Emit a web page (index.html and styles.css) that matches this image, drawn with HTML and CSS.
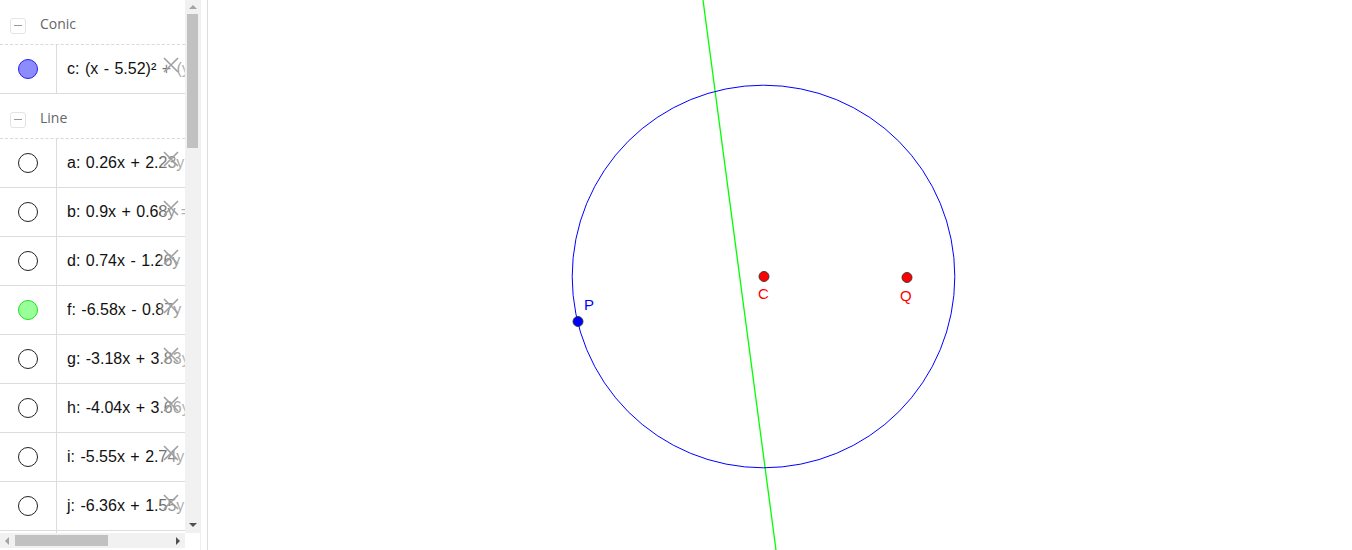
FILE: index.html
```html
<!DOCTYPE html>
<html>
<head>
<meta charset="utf-8">
<link rel="stylesheet" href="styles.css">
</head>
<body>
<div class="app">
  <div class="panel">
    <div class="panel-main">
      <div class="list">
        <div class="group">
          <span class="toggle"><span class="bar"></span></span>
          <span class="group-name">Conic</span>
        </div>
        <div class="item">
          <div class="marble-cell"><span class="marble conic"></span></div>
          <div class="formula">c: (x - 5.52)² + (y</div>
          <div class="del"><svg width="18" height="18" viewBox="0 0 18 18"><path d="M2 2 L16 16 M16 2 L2 16" /></svg></div>
        </div>
        <div class="group">
          <span class="toggle"><span class="bar"></span></span>
          <span class="group-name">Line</span>
        </div>
        <div class="item">
          <div class="marble-cell"><span class="marble"></span></div>
          <div class="formula">a: 0.26x + 2.23y</div>
          <div class="del"><svg width="18" height="18" viewBox="0 0 18 18"><path d="M2 2 L16 16 M16 2 L2 16" /></svg></div>
        </div>
        <div class="item">
          <div class="marble-cell"><span class="marble"></span></div>
          <div class="formula">b: 0.9x + 0.68y =</div>
          <div class="del"><svg width="18" height="18" viewBox="0 0 18 18"><path d="M2 2 L16 16 M16 2 L2 16" /></svg></div>
        </div>
        <div class="item">
          <div class="marble-cell"><span class="marble"></span></div>
          <div class="formula">d: 0.74x - 1.26y =</div>
          <div class="del"><svg width="18" height="18" viewBox="0 0 18 18"><path d="M2 2 L16 16 M16 2 L2 16" /></svg></div>
        </div>
        <div class="item">
          <div class="marble-cell"><span class="marble line"></span></div>
          <div class="formula">f: -6.58x - 0.87y =</div>
          <div class="del"><svg width="18" height="18" viewBox="0 0 18 18"><path d="M2 2 L16 16 M16 2 L2 16" /></svg></div>
        </div>
        <div class="item">
          <div class="marble-cell"><span class="marble"></span></div>
          <div class="formula">g: -3.18x + 3.83y</div>
          <div class="del"><svg width="18" height="18" viewBox="0 0 18 18"><path d="M2 2 L16 16 M16 2 L2 16" /></svg></div>
        </div>
        <div class="item">
          <div class="marble-cell"><span class="marble"></span></div>
          <div class="formula">h: -4.04x + 3.66y</div>
          <div class="del"><svg width="18" height="18" viewBox="0 0 18 18"><path d="M2 2 L16 16 M16 2 L2 16" /></svg></div>
        </div>
        <div class="item">
          <div class="marble-cell"><span class="marble"></span></div>
          <div class="formula">i: -5.55x + 2.74y</div>
          <div class="del"><svg width="18" height="18" viewBox="0 0 18 18"><path d="M2 2 L16 16 M16 2 L2 16" /></svg></div>
        </div>
        <div class="item">
          <div class="marble-cell"><span class="marble"></span></div>
          <div class="formula">j: -6.36x + 1.55y</div>
          <div class="del"><svg width="18" height="18" viewBox="0 0 18 18"><path d="M2 2 L16 16 M16 2 L2 16" /></svg></div>
        </div>
        <div class="item">
          <div class="marble-cell"><span class="marble"></span></div>
          <div class="formula">k: -6.6x + 0.2y</div>
          <div class="del"><svg width="18" height="18" viewBox="0 0 18 18"><path d="M2 2 L16 16 M16 2 L2 16" /></svg></div>
        </div>
      </div>
      <div class="vscroll">
        <span class="arrow up"></span>
        <div class="vtrack"><div class="vthumb"></div></div>
        <span class="arrow down"></span>
      </div>
    </div>
    <div class="hscroll-row">
      <div class="hscroll">
        <span class="arrow left"></span>
        <div class="htrack"><div class="hthumb"></div></div>
        <span class="arrow right"></span>
      </div>
      <div class="corner"></div>
    </div>
  </div>
  <div class="splitter"></div>
  <div class="canvas">
    <svg class="graphics" viewBox="208 0 1144 550" width="1144" height="550">
      <line x1="703" y1="0" x2="776" y2="550" stroke="#00ff00" stroke-width="1.3"/>
      <circle cx="763.5" cy="276.5" r="191.3" fill="none" stroke="#0000ff" stroke-width="1"/>
      <circle cx="764" cy="276.5" r="5" fill="#ff0000" stroke="#333" stroke-width="0.9"/>
      <circle cx="907" cy="277.5" r="5" fill="#ff0000" stroke="#333" stroke-width="0.9"/>
      <circle cx="578" cy="321.5" r="5" fill="#0000ff" stroke="#333" stroke-width="0.9"/>
      <text x="758" y="299" class="lbl red">C</text>
      <text x="900" y="301" class="lbl red">Q</text>
      <text x="584" y="310" class="lbl blue">P</text>
    </svg>
  </div>
</div>
</body>
</html>
```
FILE: styles.css
```css
html, body {
  margin: 0;
  padding: 0;
  background: #fff;
  overflow: hidden;
}
.app {
  display: flex;
  width: 1352px;
  height: 550px;
  font-family: "Liberation Sans", Arial, sans-serif;
}
.panel {
  width: 200px;
  height: 550px;
  display: flex;
  flex-direction: column;
  flex: none;
}
.panel-main {
  display: flex;
  height: 533px;
}
.list {
  width: 185px;
  height: 533px;
  overflow: hidden;
  flex: none;
}
.group {
  height: 44px;
  border-bottom: 1px dashed #d9d9d9;
  display: flex;
  align-items: center;
  box-sizing: border-box;
  height: 45px;
  padding-top: 3px;
}
.toggle {
  width: 14px;
  height: 14px;
  border: 1px solid #e4e4e4;
  border-radius: 3px;
  margin-left: 10px;
  display: flex;
  align-items: center;
  justify-content: center;
  margin-top: 4px;
}
.bar {
  width: 8px;
  height: 1px;
  background: #999;
}
.group-name {
  margin-left: 14px;
  font-size: 14px;
  color: #666;
  font-family: "Open Sans", "Liberation Sans", sans-serif;
}
.item {
  height: 49px;
  box-sizing: border-box;
  border-bottom: 1px solid #dcdcdc;
  display: flex;
  position: relative;
  align-items: stretch;
}
.marble-cell {
  width: 57px;
  box-sizing: border-box;
  border-right: 1px solid #dcdcdc;
  display: flex;
  align-items: center;
  justify-content: center;
  flex: none;
}
.marble {
  width: 18px;
  height: 18px;
  border: 1px solid #222;
  border-radius: 50%;
  background: #fff;
  margin-right: 1px;
}
.marble.conic {
  background: #8c8cff;
  border-color: #2222ee;
}
.marble.line {
  background: #99ff99;
  border-color: #22dd22;
}
.formula {
  padding-left: 10px;
  display: flex;
  align-items: center;
  white-space: nowrap;
  font-size: 16px;
  color: #111;
  word-spacing: 1px;
  overflow: hidden;
  flex: 1;
}
.del {
  position: absolute;
  left: 160px;
  top: 0;
  width: 25px;
  height: 48px;
  background: linear-gradient(to right, rgba(255,255,255,0.35), rgba(255,255,255,0.7));
}
.del svg {
  position: absolute;
  left: 2px;
  top: 11px;
}
.del path {
  stroke: #a0a0a0;
  stroke-width: 1.6;
  fill: none;
}
.vscroll {
  width: 15px;
  height: 533px;
  background: #f1f1f1;
  display: flex;
  flex-direction: column;
  align-items: center;
  flex: none;
}
.vtrack {
  flex: 1;
  width: 100%;
  display: flex;
  justify-content: center;
}
.vthumb {
  width: 11px;
  height: 134px;
  background: #c1c1c1;
}
.arrow {
  width: 0;
  height: 0;
  display: block;
  flex: none;
}
.arrow.up {
  border-left: 4px solid transparent;
  border-right: 4px solid transparent;
  border-bottom: 4px solid #a3a3a3;
  margin: 5px 0 5px;
}
.arrow.down {
  border-left: 4px solid transparent;
  border-right: 4px solid transparent;
  border-top: 4px solid #505050;
  margin: 5px 0 6px;
}
.hscroll-row {
  display: flex;
  height: 15px;
}
.hscroll {
  width: 185px;
  height: 15px;
  background: #f1f1f1;
  display: flex;
  align-items: center;
}
.htrack {
  flex: 1;
  height: 100%;
  display: flex;
  align-items: center;
}
.hthumb {
  width: 93px;
  height: 11px;
  background: #c1c1c1;
}
.arrow.left {
  border-top: 4px solid transparent;
  border-bottom: 4px solid transparent;
  border-right: 4px solid #a3a3a3;
  margin: 0 6px 0 5px;
}
.arrow.right {
  border-top: 4px solid transparent;
  border-bottom: 4px solid transparent;
  border-left: 4px solid #505050;
  margin: 0 5px 0 6px;
}
.corner {
  width: 15px;
  height: 15px;
  background: #fff;
}
.splitter {
  height: 550px;
  border-right: 1px solid #dcdcdc;
  flex: none;
  box-sizing: border-box;
  width: 8px;
  border-left: 1px solid #efefef;
}
.canvas {
  flex: 1;
  height: 550px;
  overflow: hidden;
}
.graphics {
  display: block;
}
.lbl {
  font-family: "Liberation Sans", Arial, sans-serif;
  font-size: 15px;
}
.red { fill: #ff0000; }
.blue { fill: #0000ff; }
```
